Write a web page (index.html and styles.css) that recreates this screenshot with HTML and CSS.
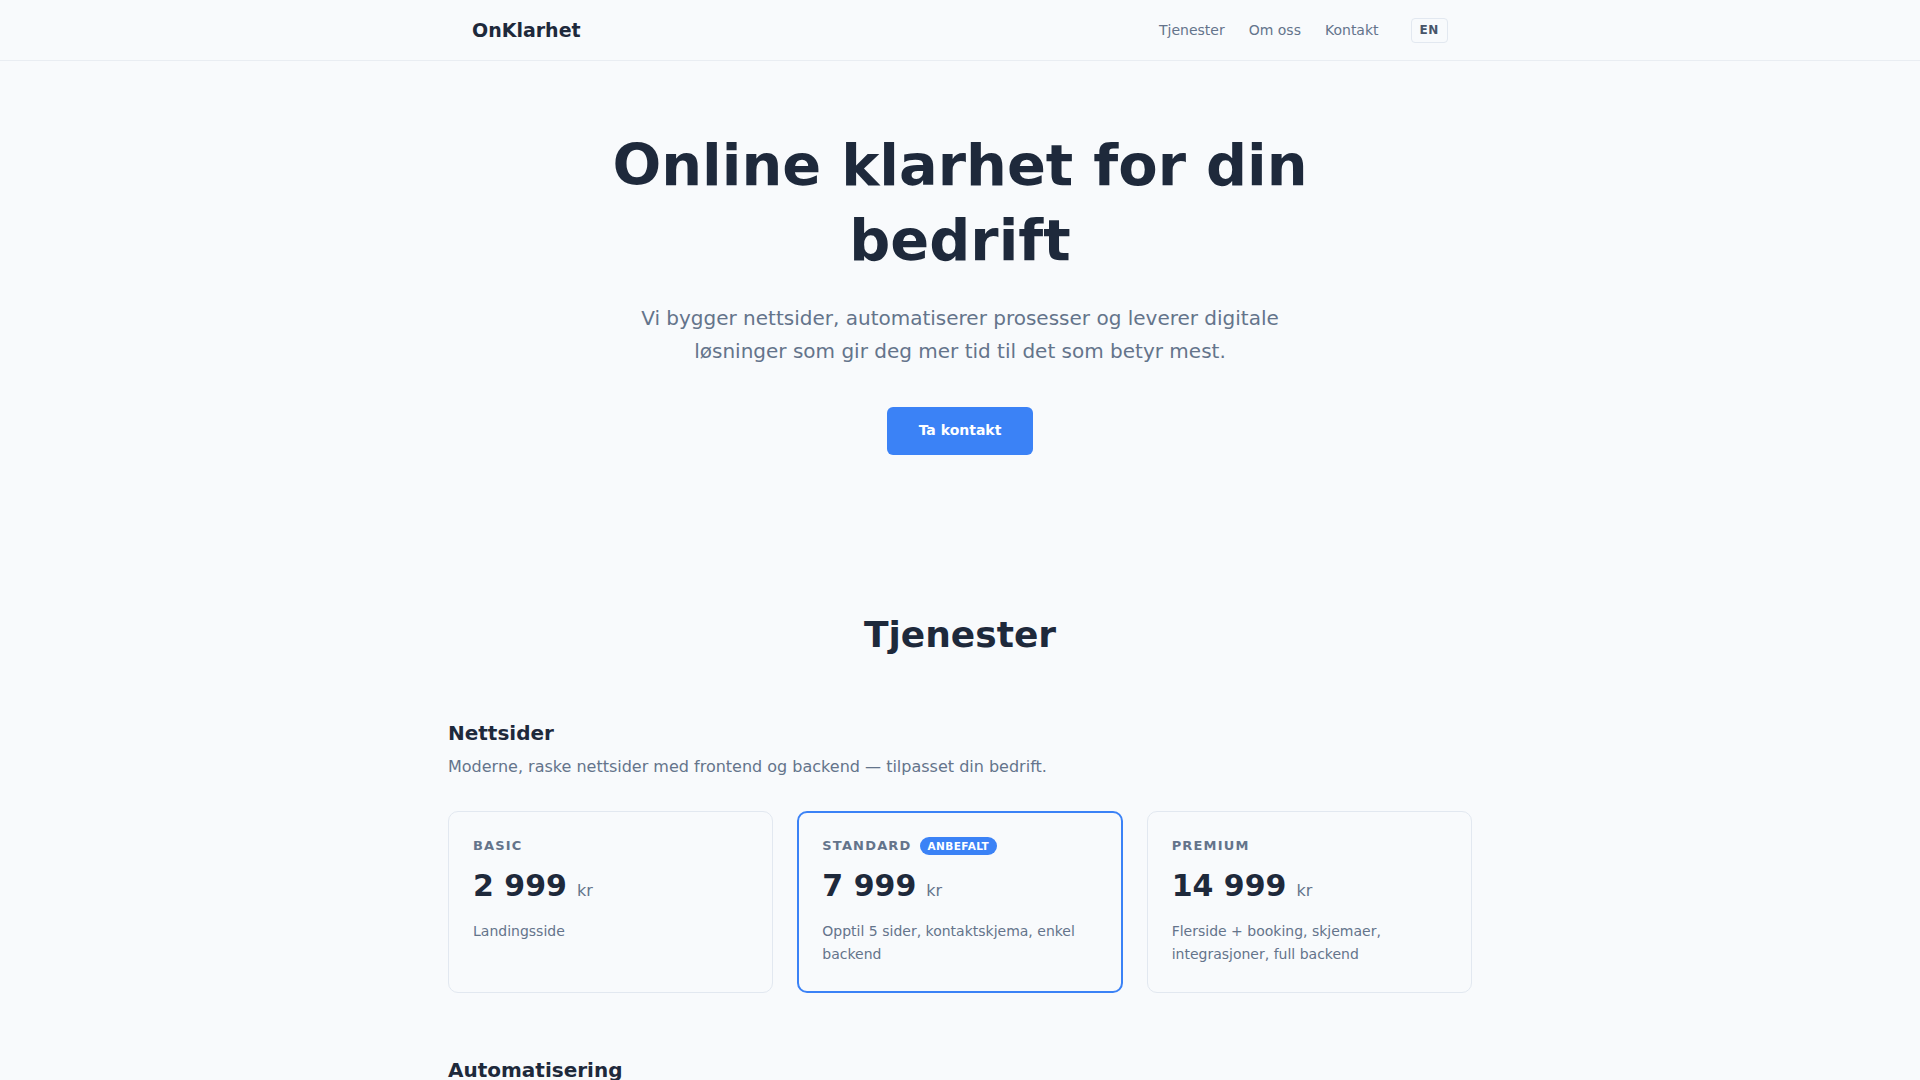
FILE: index.html
```html
<!DOCTYPE html>
<html lang="no">
<head>
<meta charset="utf-8">
<title>OnKlarhet</title>
<link rel="stylesheet" href="styles.css">
</head>
<body>
<header class="site-header">
  <div class="header-inner">
    <a class="logo" href="#">OnKlarhet</a>
    <nav class="nav">
      <a href="#tjenester">Tjenester</a>
      <a href="#om">Om oss</a>
      <a href="#kontakt">Kontakt</a>
      <button class="lang">EN</button>
    </nav>
  </div>
</header>

<main>
  <section class="hero">
    <h1>Online klarhet for din bedrift</h1>
    <p class="lead">Vi bygger nettsider, automatiserer prosesser og leverer digitale løsninger som gir deg mer tid til det som betyr mest.</p>
    <a class="cta" href="#kontakt">Ta kontakt</a>
  </section>

  <section class="services" id="tjenester">
    <h2>Tjenester</h2>

    <div class="group">
      <h3>Nettsider</h3>
      <p class="group-desc">Moderne, raske nettsider med frontend og backend — tilpasset din bedrift.</p>
      <div class="cards">
        <div class="card">
          <div class="tier">BASIC</div>
          <div class="price">2 999<span class="cur">kr</span></div>
          <p class="card-desc">Landingsside</p>
        </div>
        <div class="card featured">
          <div class="tier">STANDARD<span class="badge">ANBEFALT</span></div>
          <div class="price">7 999<span class="cur">kr</span></div>
          <p class="card-desc">Opptil 5 sider, kontaktskjema, enkel backend</p>
        </div>
        <div class="card">
          <div class="tier">PREMIUM</div>
          <div class="price">14 999<span class="cur">kr</span></div>
          <p class="card-desc">Flerside + booking, skjemaer, integrasjoner, full backend</p>
        </div>
      </div>
    </div>

    <div class="group">
      <h3>Automatisering</h3>
      <p class="group-desc">Spar tid med automatiserte arbeidsflyter og integrasjoner.</p>
      <div class="cards">
        <div class="card">
          <div class="tier">BASIC</div>
          <div class="price">1 999<span class="cur">kr</span></div>
          <p class="card-desc">Enkel automatisering</p>
        </div>
        <div class="card">
          <div class="tier">STANDARD</div>
          <div class="price">4 999<span class="cur">kr</span></div>
          <p class="card-desc">Flere arbeidsflyter og integrasjoner</p>
        </div>
        <div class="card">
          <div class="tier">PREMIUM</div>
          <div class="price">9 999<span class="cur">kr</span></div>
          <p class="card-desc">Skreddersydde løsninger</p>
        </div>
      </div>
    </div>
  </section>
</main>
</body>
</html>
```

FILE: styles.css
```css
* { box-sizing: border-box; }

html, body {
  margin: 0;
  padding: 0;
}

body {
  background: #f8fafc;
  color: #1e293b;
  font-family: "DejaVu Sans", sans-serif;
}

a { text-decoration: none; color: inherit; }

.site-header {
  border-bottom: 1px solid #e9edf2;
  background: #f8fafc;
}

.header-inner {
  max-width: 1024px;
  margin: 0 auto;
  padding: 0 24px;
  height: 60px;
  display: flex;
  align-items: center;
  justify-content: space-between;
}

.logo {
  font-size: 19px;
  font-weight: 700;
  color: #1e293b;
}

.nav {
  display: flex;
  align-items: center;
  gap: 24px;
}

.nav a {
  font-size: 14px;
  color: #64748b;
}

.lang {
  margin-left: 8px;
  font-family: "DejaVu Sans", sans-serif;
  font-size: 12px;
  font-weight: 700;
  letter-spacing: 0.05em;
  line-height: 15px;
  color: #475569;
  background: transparent;
  border: 1px solid #e2e8f0;
  border-radius: 4px;
  padding: 4px 8px;
}

.hero {
  text-align: center;
  padding: 67px 24px 80px;
}

.hero h1 {
  max-width: 820px;
  margin: 0 auto;
  font-size: 57.4px;
  line-height: 75px;
  font-weight: 700;
  color: #1e293b;
}

.lead {
  max-width: 690px;
  margin: 24px auto 0;
  font-size: 20px;
  line-height: 33px;
  color: #64748b;
}

.cta {
  display: inline-block;
  margin-top: 39px;
  padding: 14px 32px;
  font-size: 14px;
  line-height: 19.6px;
  font-weight: 700;
  color: #ffffff;
  background: #3b82f6;
  border-radius: 6px;
}

.services {
  max-width: 1024px;
  margin: 0 auto;
  padding: 78px 0 80px;
}

.services h2 {
  margin: 0 0 64px;
  text-align: center;
  font-size: 36px;
  line-height: 43px;
  font-weight: 700;
}

.group {
  margin-bottom: 64px;
}

.group h3 {
  margin: 0;
  font-size: 20px;
  line-height: 26px;
  font-weight: 700;
}

.group-desc {
  margin: 8px 0 32px;
  font-size: 16px;
  line-height: 25.6px;
  color: #64748b;
}

.cards {
  display: grid;
  grid-template-columns: repeat(3, 1fr);
  gap: 24px;
}

.card {
  border: 1px solid #e2e8f0;
  border-radius: 10px;
  padding: 24px 24px 27px;
}

.card.featured {
  border: 2px solid #3b82f6;
  padding: 23px 23px 26px;
}

.tier {
  display: flex;
  align-items: center;
  gap: 8px;
  font-size: 13px;
  line-height: 20px;
  font-weight: 700;
  letter-spacing: 0.09em;
  color: #64748b;
}

.badge {
  display: inline-block;
  padding: 0 8px;
  height: 18px;
  line-height: 18px;
  border-radius: 9px;
  background: #3b82f6;
  color: #ffffff;
  font-size: 10.5px;
  letter-spacing: 0.04em;
}

.price {
  margin-top: 9px;
  font-size: 30px;
  line-height: 42px;
  font-weight: 700;
  color: #1e293b;
}

.cur {
  margin-left: 10px;
  font-size: 16px;
  font-weight: 400;
  color: #64748b;
}

.card-desc {
  margin: 8px 0 0;
  font-size: 14px;
  line-height: 22.4px;
  color: #64748b;
}
```
